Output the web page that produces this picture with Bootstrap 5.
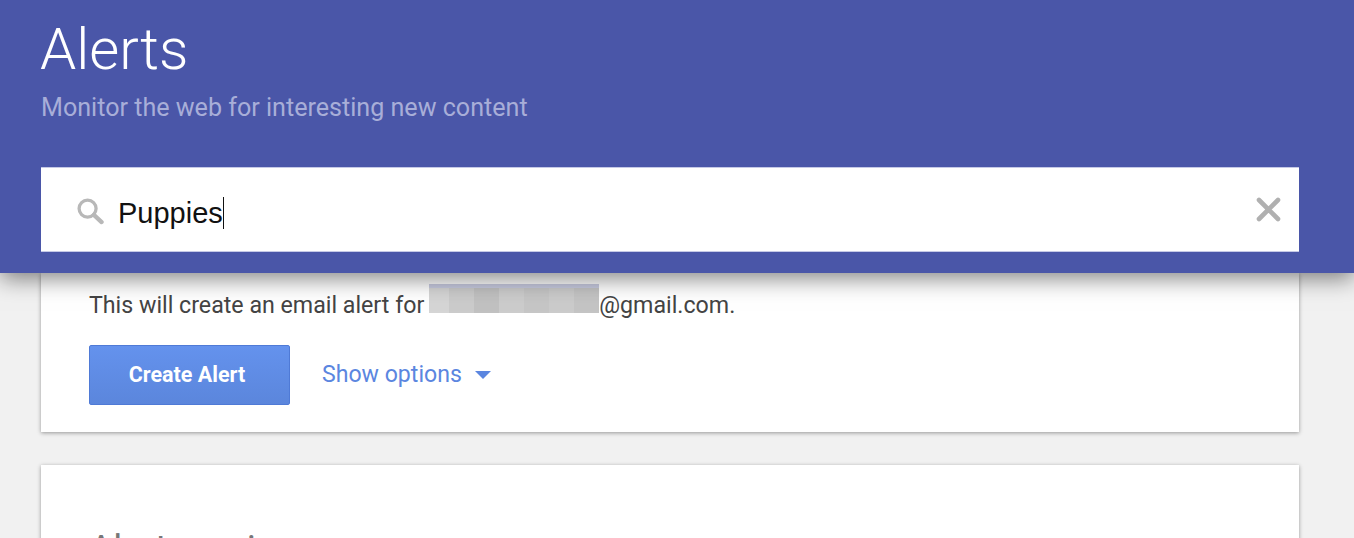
<!doctype html>
<html lang="en">
<head>
<meta charset="utf-8">
<title>Alerts</title>
<link rel="stylesheet" href="https://cdn.jsdelivr.net/npm/bootstrap@5.3.0/dist/css/bootstrap.min.css">
<style>
html,body{height:538px;overflow:hidden;background:#f1f1f1;font-family:Roboto,sans-serif}
.hero{height:273px;background:#4a56a8;padding:0 55px 0 41px;box-shadow:0 5px 22px rgba(0,0,0,.5);position:relative;z-index:2}
.hero-title{font-family:Roboto,sans-serif;font-weight:300;font-size:58px;line-height:72px;color:#fff;margin:0 0 0 -1px;padding-top:13px}
.hero-sub{font-size:25.1px;line-height:28px;color:#a8aed8;margin:9px 0 0 0}
.search-box{height:85px;margin-top:45px;background:#fff;padding:0 17px 0 35px;border-bottom:1px solid #c5c9e6;border-top:1px solid #c5c9e6}
.search-glass{margin-top:2px}
.search-text{font-family:"Liberation Sans",sans-serif;font-size:29px;color:#111;line-height:32px;margin-left:14px;margin-top:6px;border-right:1.5px solid #111;height:32px}
.search-clear{margin-top:1px}
.stack{padding:0 55px 0 41px}
.panel{background:#fff;box-shadow:0 1px 4px rgba(0,0,0,.38)}
.panel-one{height:159px;padding:11px 48px 0}
.panel-two{height:120px;margin-top:33px;padding:63px 48px 0}
.mail-line{font-size:23.2px;line-height:28px;color:#444;height:43px}
.redact{display:inline-block;overflow:hidden;width:170px;height:29px;vertical-align:0;margin-left:5px}
.redact-top{display:block;height:4px;background:#c8cbe0}
.redact-cells{display:flex;height:25px}
.redact-cells i{display:block;height:100%}
.make-btn{width:201px;height:60px;background:linear-gradient(#6492ed,#5b86dc);border:1px solid #4f7ad6;border-radius:2px;color:#fff;font-weight:700;font-size:21.5px;padding:0 5px 0 0;font-family:Roboto,sans-serif}
.make-btn:hover{background:#5b86dc;color:#fff;border-color:#4f7ad6}
.opts{color:#5b86e0;font-size:23.1px;text-decoration:none;margin-left:32px}
.opts:hover{color:#5b86e0}
.caret-mark{width:0;height:0;border-left:8.5px solid transparent;border-right:8.5px solid transparent;border-top:8px solid #5b86e0;margin-left:13px;margin-top:0}
.preview-head{font-size:37px;color:#777;line-height:42px;margin:0;font-weight:400}
</style>
</head>
<body>
<header class="hero">
  <h1 class="hero-title">Alerts</h1>
  <p class="hero-sub">Monitor the web for interesting new content</p>
  <div class="search-box d-flex align-items-center">
    <svg class="search-glass" width="28" height="28" viewBox="0 0 29 29" fill="none" stroke="#b8b8b8" aria-hidden="true"><circle cx="12" cy="12" r="8.8" stroke-width="3.4"/><path d="M18.5 18.5l8 7.5" stroke-width="4.4" stroke-linecap="round"/></svg>
    <span class="search-text">Puppies</span>
    <svg class="search-clear ms-auto" width="26" height="26" viewBox="0 0 26 26" stroke="#b0b0b0" stroke-width="4.6" stroke-linecap="round" aria-hidden="true"><path d="M3 3l19 19M22 3L3 22"/></svg>
  </div>
</header>
<main class="stack">
  <section class="panel panel-one">
    <div class="mail-line">This will create an email alert for<span class="redact"><span class="redact-top"></span><span class="redact-cells"><i style="width:20px;background:#d5d5d5"></i><i style="width:25px;background:#cbcbcb"></i><i style="width:25px;background:#c1c1c1"></i><i style="width:25px;background:#cccccc"></i><i style="width:25px;background:#c6c6c6"></i><i style="width:25px;background:#cbcbcb"></i><i style="width:25px;background:#c4c4c4"></i></span></span>@gmail.com.</div>
    <div class="d-flex align-items-center" style="margin-top:18px">
      <button type="button" class="btn make-btn">Create Alert</button>
      <a href="#" class="opts">Show options</a>
      <span class="caret-mark"></span>
    </div>
  </section>
  <section class="panel panel-two">
    <h2 class="preview-head">Alert preview</h2>
  </section>
</main>
</body>
</html>
